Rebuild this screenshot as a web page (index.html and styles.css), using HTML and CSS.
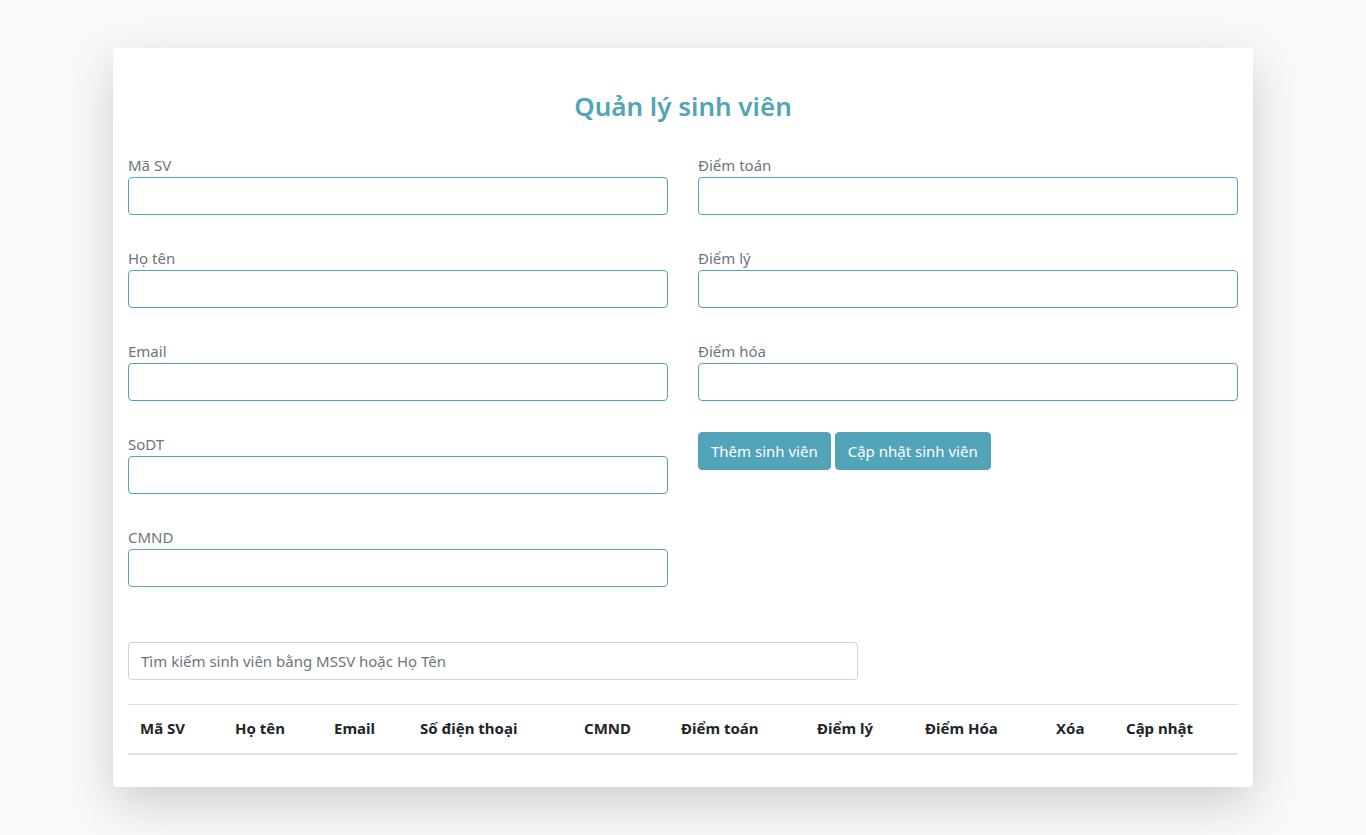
FILE: index.html
```html
<!DOCTYPE html>
<html lang="vi">
<head>
<meta charset="utf-8">
<title>Quản lý sinh viên</title>
<link rel="stylesheet" href="styles.css">
</head>
<body>
<div class="card">
  <h3 class="title">Quản lý sinh viên</h3>
  <div class="form-row">
    <div class="col">
      <div class="group"><label>Mã SV</label><input class="field" type="text"></div>
      <div class="group"><label>Họ tên</label><input class="field" type="text"></div>
      <div class="group"><label>Email</label><input class="field" type="text"></div>
      <div class="group"><label>SoDT</label><input class="field" type="text"></div>
      <div class="group"><label>CMND</label><input class="field" type="text"></div>
    </div>
    <div class="col">
      <div class="group"><label>Điểm toán</label><input class="field" type="text"></div>
      <div class="group"><label>Điểm lý</label><input class="field" type="text"></div>
      <div class="group"><label>Điểm hóa</label><input class="field" type="text"></div>
      <div class="actions">
        <button class="btn">Thêm sinh viên</button>
        <button class="btn">Cập nhật sinh viên</button>
      </div>
    </div>
  </div>
  <input class="search" type="text" placeholder="Tìm kiếm sinh viên bằng MSSV hoặc Họ Tên">
  <table class="table">
    <thead>
      <tr>
        <th class="c1">Mã SV</th>
        <th class="c2">Họ tên</th>
        <th class="c3">Email</th>
        <th class="c4">Số điện thoại</th>
        <th class="c5">CMND</th>
        <th class="c6">Điểm toán</th>
        <th class="c7">Điểm lý</th>
        <th class="c8">Điểm Hóa</th>
        <th class="c9">Xóa</th>
        <th class="c10">Cập nhật</th>
      </tr>
    </thead>
    <tbody></tbody>
  </table>
</div>
</body>
</html>
```
FILE: styles.css
```css
* { box-sizing: border-box; }
html, body { margin: 0; }
body {
  background: #f8f9fa;
  font-family: "Noto Sans", "Open Sans", sans-serif;
  font-size: 16px;
  line-height: 1.5;
  color: #212529;
  padding: 48px 0 49px;
  min-height: 835px;
}
.card {
  width: 1140px;
  margin: 0 auto;
  background: #fff;
  border-radius: 4px;
  box-shadow: 0 1rem 3rem rgba(0,0,0,.175);
  padding: 41px 15px 32px;
}
.title {
  margin: 0 0 30px;
  text-align: center;
  font-size: 26px;
  line-height: 34px;
  font-weight: 600;
  color: #52a4b9;
}
.form-row {
  display: flex;
  gap: 30px;
}
.col { flex: 1; display: flex; flex-direction: column; gap: 31px; }
.group { display: flex; flex-direction: column; }
.group label {
  color: #6c757d;
  font-size: 15px;
  line-height: 24px;
}
.field {
  height: 38px;
  border: 1px solid #52a4b9;
  border-radius: 4px;
  font: inherit;
  padding: 6px 12px;
  outline: none;
}
.actions { display: flex; gap: 4px; }
.btn {
  height: 38px;
  background: #52a4b9;
  border: 1px solid #52a4b9;
  color: #fff;
  border-radius: 4px;
  font-family: inherit;
  font-size: 15px;
  padding: 0 12px;
}
.search {
  display: block;
  margin-top: 55px;
  width: 730px;
  height: 38px;
  border: 1px solid #ced4da;
  border-radius: 4px;
  font-family: inherit;
  font-size: 15px;
  padding: 6px 12px;
  outline: none;
}
.search::placeholder { color: #6c757d; }
.table {
  margin-top: 24px;
  width: 100%;
  border-collapse: collapse;
  table-layout: fixed;
}
.table th {
  text-align: left;
  font-weight: 700;
  font-size: 15px;
  padding: 11px 12px 12px;
  height: 49px;
  border-top: 1px solid #dee2e6;
  border-bottom: 2px solid #dee2e6;
  white-space: nowrap;
}
.c1 { width: 95px; }
.c2 { width: 99px; }
.c3 { width: 86px; }
.c4 { width: 164px; }
.c5 { width: 97px; }
.c6 { width: 136px; }
.c7 { width: 108px; }
.c8 { width: 131px; }
.c9 { width: 70px; }
.c10 { width: 124px; }
```
